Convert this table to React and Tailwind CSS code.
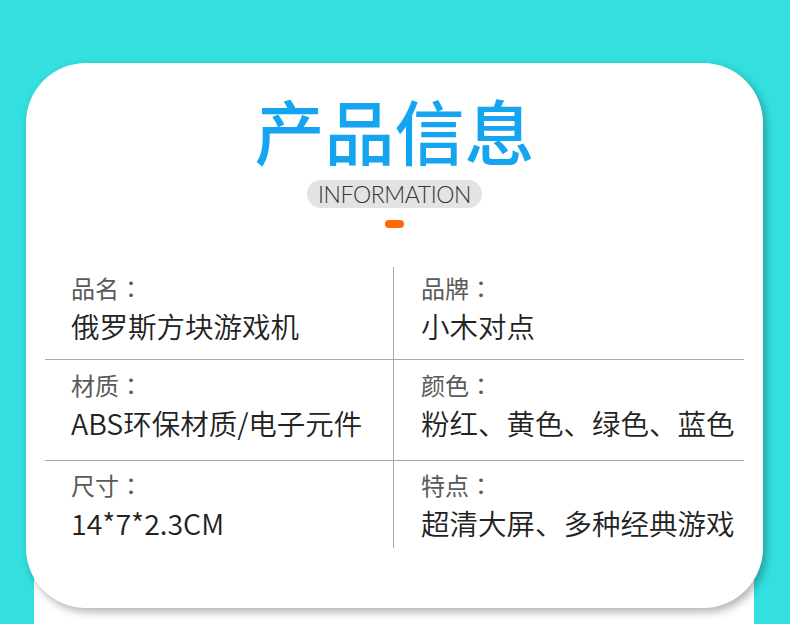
import React from "react";

const rows = [
  { h: "h-[93px]", pt: "pt-[6px]", border: true, l: ["品名", "俄罗斯方块游戏机"], r: ["品牌", "小木对点"] },
  { h: "h-[101px]", pt: "pt-[10px]", border: true, l: ["材质", "ABS环保材质/电子元件"], r: ["颜色", "粉红、黄色、绿色、蓝色"] },
  { h: "h-[87px]", pt: "pt-[9px]", border: false, l: ["尺寸", "14*7*2.3CM"], r: ["特点", "超清大屏、多种经典游戏"] },
];

function Cell({ data, className }) {
  return (
    <div className={className}>
      <div className="text-[24px] leading-[30px] text-[#5a5a5a]">
        {data[0]}
        <span style={{ fontFamily: '"Noto Sans CJK JP", sans-serif' }}>：</span>
      </div>
      <div className="mt-[5px] text-[28.5px] leading-[36px] font-[350] text-[#222] whitespace-nowrap">{data[1]}</div>
    </div>
  );
}

export default function App() {
  return (
    <div
      className="w-[790px] h-[624px] bg-[#33dfdf] overflow-hidden pt-[63px]"
      style={{ fontFamily: '"Noto Sans CJK SC", "Noto Sans", sans-serif' }}
    >
      <div className="relative z-10 ml-[26px] w-[737px] h-[545px] bg-white rounded-[60px] shadow-[3px_4px_8px_rgba(0,0,0,0.3)] flex flex-col items-center pt-[32px]">
        <div className="text-[70px] leading-[70px] font-medium text-[#15a4ef]">产品信息</div>
        <div
          className="mt-[15px] w-[175px] h-[28px] rounded-full bg-[#e3e3e3] flex items-center justify-center text-[23px] tracking-[-0.4px] font-light text-[#333] leading-none"
          style={{ fontFamily: 'Lato, "Noto Sans", sans-serif' }}
        >
          INFORMATION
        </div>
        <div className="mt-[12px] w-[19px] h-[8px] rounded-full bg-[#ff6a00]" />
        <div className="mt-[39px] w-[699px] self-start ml-[19px] flex flex-col">
          {rows.map((row, i) => (
            <div key={i} className={`flex ${row.h} ${row.border ? "border-b border-[#a8a8a8]" : ""}`}>
              <Cell data={row.l} className={`w-[348px] pl-[26px] ${row.pt}`} />
              <Cell data={row.r} className={`flex-1 border-l border-[#a8a8a8] pl-[27px] ${row.pt}`} />
            </div>
          ))}
        </div>
      </div>
      <div className="ml-[34px] w-[720px] h-[100px] -mt-[84px] bg-white" />
    </div>
  );
}
